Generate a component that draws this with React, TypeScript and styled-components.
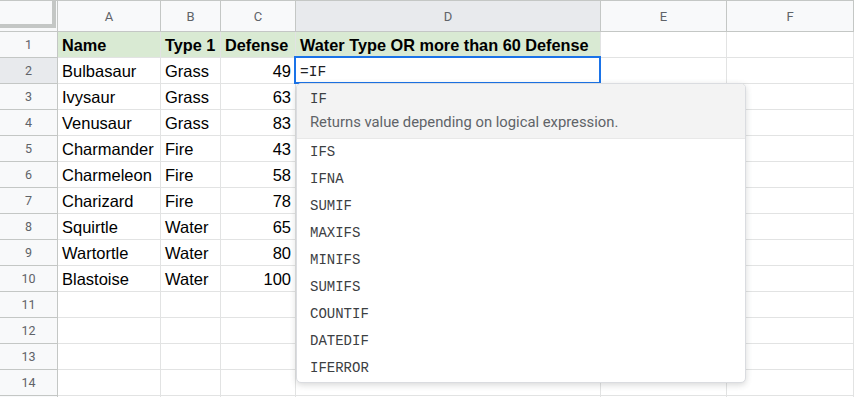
import * as React from 'react';
import styled, { createGlobalStyle } from 'styled-components';

const GlobalStyle = createGlobalStyle`
    html, body {
        margin: 0;
        padding: 0;
        background: #fff;
        overflow: hidden;
    }
    body {
        font-family: 'Liberation Sans', Arial, sans-serif;
    }
`;

const COLS = ['A', 'B', 'C', 'D', 'E', 'F'];

const DATA: Array<[string, string, number]> = [
    ['Bulbasaur', 'Grass', 49],
    ['Ivysaur', 'Grass', 63],
    ['Venusaur', 'Grass', 83],
    ['Charmander', 'Fire', 43],
    ['Charmeleon', 'Fire', 58],
    ['Charizard', 'Fire', 78],
    ['Squirtle', 'Water', 65],
    ['Wartortle', 'Water', 80],
    ['Blastoise', 'Water', 100],
];

const SUGGESTIONS = ['IFS', 'IFNA', 'SUMIF', 'MAXIFS', 'MINIFS', 'SUMIFS', 'COUNTIF', 'DATEDIF', 'IFERROR'];

const Sheet = styled.div`
    position: relative;
    width: 854px;
    height: 397px;
    overflow: hidden;
`;

const Grid = styled.div`
    display: grid;
    grid-template-columns: 58px 103px 60px 75px 305px 126px 1fr;
    grid-template-rows: 31px repeat(15, 26px);
    border-top: 1px solid #c4c7c5;
`;

const Corner = styled.div`
    background: #f8f9fa;
    border-right: 1px solid #c4c7c5;
    border-bottom: 1px solid #c4c7c5;
`;

const FreezeBars = styled.div`
    box-sizing: border-box;
    width: 56px;
    height: 27px;
    border-right: 4px solid #c4c7c5;
    border-bottom: 4px solid #c4c7c5;
`;

const ColHeader = styled.div<{ $active?: boolean }>`
    background: ${p => (p.$active ? '#e8eaed' : '#f8f9fa')};
    border-right: 1px solid #c4c7c5;
    border-bottom: 1px solid #c4c7c5;
    display: flex;
    align-items: center;
    justify-content: center;
    font-family: 'Roboto', 'Liberation Sans', Arial, sans-serif;
    font-size: 13px;
    color: #5f6368;
    padding-top: 1px;
`;

const RowHeader = styled.div<{ $active?: boolean }>`
    background: ${p => (p.$active ? '#e8eaed' : '#f8f9fa')};
    border-right: 1px solid #c4c7c5;
    border-bottom: 1px solid #c4c7c5;
    display: flex;
    align-items: center;
    justify-content: center;
    font-family: 'Roboto', 'Liberation Sans', Arial, sans-serif;
    font-size: 12.5px;
    color: #5f6368;
`;

const Cell = styled.div<{ $head?: boolean; $num?: boolean }>`
    position: relative;
    background: ${p => (p.$head ? '#d9ead3' : '#fff')};
    border-right: 1px solid #e2e3e3;
    border-bottom: 1px solid #e2e3e3;
    display: flex;
    align-items: center;
    justify-content: ${p => (p.$num ? 'flex-end' : 'flex-start')};
    padding: 2px 4px 0 4px;
    font-size: ${p => (p.$head ? '16.3px' : '16.5px')};
    font-weight: ${p => (p.$head ? 700 : 400)};
    color: #000;
    white-space: nowrap;
`;

const EditCell = styled(Cell)`
    font-family: 'Liberation Mono', 'DejaVu Sans Mono', monospace;
    font-size: 14.5px;
    color: #202124;
    z-index: 2;

    &::after {
        content: '';
        position: absolute;
        top: -2px;
        left: -2px;
        right: -1px;
        bottom: -1px;
        border: 2px solid #1a73e8;
        pointer-events: none;
    }
`;

const Dropdown = styled.div`
    position: absolute;
    left: 296px;
    top: 83px;
    width: 450px;
    box-sizing: border-box;
    background: #fff;
    border: 1px solid #dadce0;
    border-radius: 5px;
    box-shadow: 0 2px 6px rgba(60, 64, 67, 0.2);
    overflow: hidden;
    z-index: 3;
`;

const TopItem = styled.div`
    background: #f3f3f3;
    padding: 2px 13px 6px;
    border-bottom: 1px solid #e8e8e8;
`;

const FnName = styled.div`
    font-family: 'Liberation Mono', 'DejaVu Sans Mono', monospace;
    font-size: 14px;
    line-height: 26px;
    color: #3c4043;
`;

const FnDesc = styled.div`
    font-family: 'Roboto', 'Liberation Sans', Arial, sans-serif;
    font-size: 14.8px;
    line-height: 20px;
    color: #5f6368;
`;

const Item = styled(FnName)`
    padding: 0 13px;
    height: 27px;
    line-height: 27px;
`;

export default function App() {
    const bodyRows: Array<Array<string | number | null>> = [
        ...DATA.map(r => [r[0], r[1], r[2], null, null, null]),
        ...Array.from({ length: 5 }, () => [null, null, null, null, null, null]),
    ];

    return (
        <>
            <GlobalStyle />
            <Sheet>
                <Grid>
                    <Corner>
                        <FreezeBars />
                    </Corner>
                    {COLS.map(c => (
                        <ColHeader key={c} $active={c === 'D'}>
                            {c}
                        </ColHeader>
                    ))}

                    <RowHeader>1</RowHeader>
                    <Cell $head>Name</Cell>
                    <Cell $head>Type 1</Cell>
                    <Cell $head>Defense</Cell>
                    <Cell $head>Water Type OR more than 60 Defense</Cell>
                    <Cell />
                    <Cell />

                    {bodyRows.map((row, i) => {
                        const n = i + 2;
                        return (
                            <React.Fragment key={n}>
                                {/* row 15 is cut by the window edge, its label is out of view */}
                                <RowHeader $active={n === 2}>{n < 15 ? n : ''}</RowHeader>
                                {row.map((v, j) =>
                                    n === 2 && j === 3 ? (
                                        <EditCell key={j}>=IF</EditCell>
                                    ) : (
                                        <Cell key={j} $num={typeof v === 'number'}>
                                            {v}
                                        </Cell>
                                    )
                                )}
                            </React.Fragment>
                        );
                    })}
                </Grid>

                <Dropdown>
                    <TopItem>
                        <FnName>IF</FnName>
                        <FnDesc>Returns value depending on logical expression.</FnDesc>
                    </TopItem>
                    {SUGGESTIONS.map(s => (
                        <Item key={s}>{s}</Item>
                    ))}
                </Dropdown>
            </Sheet>
        </>
    );
}
